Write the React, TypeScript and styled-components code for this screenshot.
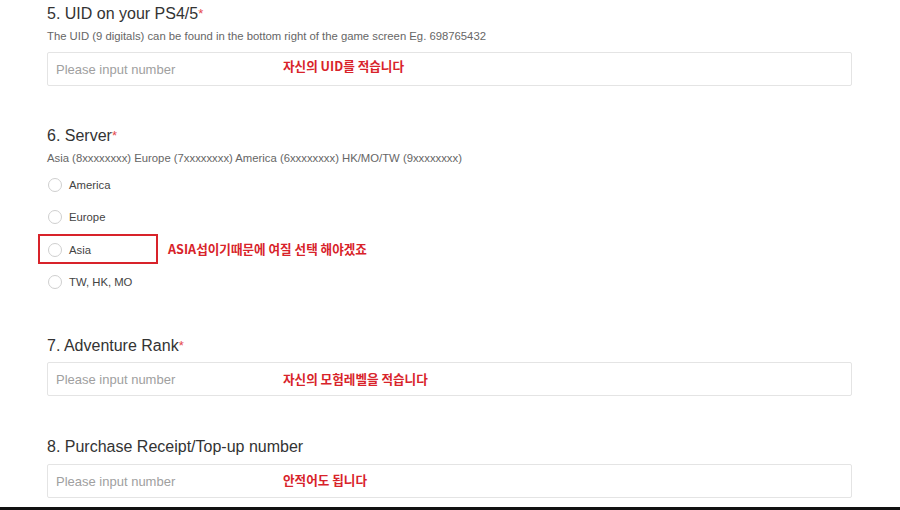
import React from 'react';
import styled, { createGlobalStyle } from 'styled-components';

const noteColor = '#d8232a';

const GlobalStyle = createGlobalStyle`
  html, body {
    margin: 0;
    padding: 0;
    background: #ffffff;
  }
  body {
    font-family: "Liberation Sans", Arial, sans-serif;
  }
`;

const Page = styled.div`
  width: 900px;
  height: 510px;
  box-sizing: border-box;
  border-bottom: 3px solid #111;
  overflow: hidden;
  padding: 4px 48px 0 47px;
`;

const Question = styled.div<{ $gap?: number }>`
  margin-bottom: ${(p) => p.$gap ?? 0}px;
`;

const Title = styled.div<{ $gap?: number }>`
  font-size: 16px;
  line-height: 20px;
  color: #333;
  margin-bottom: ${(p) => p.$gap ?? 4}px;
`;

const Star = styled.span`
  color: #e5484d;
  font-size: 13px;
  vertical-align: top;
`;

const Hint = styled.div`
  font-size: 11.3px;
  line-height: 16px;
  color: #666;
  margin-bottom: 8px;
`;

const Field = styled.div`
  position: relative;
  height: 34px;
  box-sizing: border-box;
  border: 1px solid #e4e4e4;
  border-radius: 2px;
  background: #fff;
  display: flex;
  align-items: center;
  padding: 0 8px;
`;

const Input = styled.input`
  border: none;
  outline: none;
  flex: 1;
  font-family: "Liberation Sans", Arial, sans-serif;
  font-size: 13px;
  color: #333;
  padding: 0;
  background: transparent;

  &::placeholder {
    color: #a0a0a0;
  }
`;

const Note = styled.span<{ $left: number; $top?: number }>`
  position: absolute;
  left: ${(p) => p.$left}px;
  top: ${(p) => p.$top ?? 6}px;
  font-family: "Noto Sans CJK KR", "Noto Sans", sans-serif;
  font-weight: 700;
  font-size: 12.6px;
  line-height: 17px;
  color: ${noteColor};
  white-space: nowrap;
`;

const Options = styled.div`
  display: flex;
  flex-direction: column;
  gap: 14.4px;
  padding-top: 2px;
`;

const Option = styled.label`
  position: relative;
  display: flex;
  align-items: center;
  gap: 7px;
  height: 18px;
  font-size: 11.3px;
  color: #444;
`;

const Circle = styled.span`
  width: 12px;
  height: 12px;
  border-radius: 50%;
  border: 1px solid #cfcfcf;
  background: #fff;
  margin-left: 1px;
`;

const Highlight = styled.span`
  position: absolute;
  left: -9px;
  top: -7px;
  width: 116px;
  height: 26px;
  border: 2px solid #d8232a;
`;

const servers = ['America', 'Europe', 'Asia', 'TW, HK, MO'];

export default function App() {
  return (
    <>
      <GlobalStyle />
      <Page>
        <Question $gap={40}>
          <Title>
            5. UID on your PS4/5<Star>*</Star>
          </Title>
          <Hint>The UID (9 digitals) can be found in the bottom right of the game screen Eg. 698765432</Hint>
          <Field>
            <Input placeholder="Please input number" />
            <Note $left={235} $top={4}>자신의 UID를 적습니다</Note>
          </Field>
        </Question>

        <Question $gap={45}>
          <Title>
            6. Server<Star>*</Star>
          </Title>
          <Hint>Asia (8xxxxxxxx) Europe (7xxxxxxxx) America (6xxxxxxxx) HK/MO/TW (9xxxxxxxx)</Hint>
          <Options>
            {servers.map((s) => (
              <Option key={s}>
                <Circle />
                {s}
                {s === 'Asia' && (
                  <>
                    <Highlight />
                    <Note $left={121} $top={-1}>ASIA섭이기때문에 여질 선택 해야겠죠</Note>
                  </>
                )}
              </Option>
            ))}
          </Options>
        </Question>

        <Question $gap={41}>
          <Title $gap={6}>
            7. Adventure Rank<Star>*</Star>
          </Title>
          <Field>
            <Input placeholder="Please input number" />
            <Note $left={235} $top={7}>자신의 모험레벨을 적습니다</Note>
          </Field>
        </Question>

        <Question>
          <Title $gap={7}>8. Purchase Receipt/Top-up number</Title>
          <Field>
            <Input placeholder="Please input number" />
            <Note $left={235} $top={6}>안적어도 됩니다</Note>
          </Field>
        </Question>
      </Page>
    </>
  );
}
